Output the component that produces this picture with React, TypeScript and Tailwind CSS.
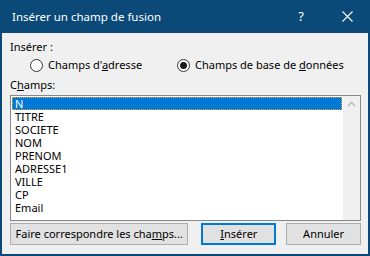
import React from 'react'

const FIELDS = ['N', 'TITRE', 'SOCIETE', 'NOM', 'PRENOM', 'ADRESSE1', 'VILLE', 'CP', 'Email']

function Radio({ checked, children }: { checked?: boolean; children: React.ReactNode }) {
  return (
    <div className="flex items-center gap-[5px]">
      <span className="flex h-[13px] w-[13px] items-center justify-center rounded-full border border-[#333333] bg-white">
        {checked && <span className="h-[7px] w-[7px] rounded-full bg-[#1a1a1a]" />}
      </span>
      <span>{children}</span>
    </div>
  )
}

export default function App() {
  return (
    <div
      className="flex h-[256px] w-[370px] flex-col bg-[#0b4a78] text-[11px] text-black"
      style={{ fontFamily: '"Noto Sans", "Segoe UI", sans-serif' }}
    >
      {/* Title bar */}
      <div className="flex h-[33px] shrink-0 items-center pl-[12px] text-white">
        <span className="flex-1 text-[11.5px]">Insérer un champ de fusion</span>
        <span className="w-[46px] text-center text-[13px]">?</span>
        <span className="flex w-[46px] items-center justify-center">
          <svg width="11" height="11" viewBox="0 0 11 11" stroke="white" strokeWidth="1.1">
            <path d="M0.5 0.5 L10.5 10.5 M10.5 0.5 L0.5 10.5" />
          </svg>
        </span>
      </div>

      {/* Body */}
      <div className="mx-[2px] mb-[2px] flex flex-1 flex-col bg-[#f0f0f0] pl-[8px] pr-[7px] pt-[6px]">
        <div className="leading-[16px]">Insérer :</div>
        <div className="mt-[1px] flex h-[18px] items-center pl-[20px] leading-[16px]">
          <div className="w-[147px]">
            <Radio>
              Champs d'<span className="underline">a</span>dresse
            </Radio>
          </div>
          <Radio checked>
            Champs de base de <span className="underline">d</span>onnées
          </Radio>
        </div>
        <div className="mt-[3px] leading-[16px]">
          C<span className="underline">h</span>amps:
        </div>

        {/* List */}
        <div className="mt-[2px] flex h-[126px] border border-[#828790] bg-white">
          <div className="flex-1 py-[1px] pl-[1px]">
            {FIELDS.map((f, i) => (
              <div
                key={f}
                className={
                  i === 0
                    ? 'h-[13px] border border-dotted border-[#f5a623] bg-[#0078d7] pl-[2px] leading-[11px] text-white'
                    : 'h-[13px] pl-[3px] leading-[13px]'
                }
              >
                {f}
              </div>
            ))}
          </div>
          <div className="ml-[1px] flex w-[17px] justify-center bg-[#f0f0f0] pt-[5px]">
            <svg width="9" height="6" viewBox="0 0 9 6" fill="none" stroke="#c0c0c0" strokeWidth="1.6">
              <path d="M0.8 5.2 L4.5 1.5 L8.2 5.2" />
            </svg>
          </div>
        </div>

        {/* Buttons */}
        <div className="mt-[2px] flex h-[22px] items-stretch whitespace-nowrap">
          <button className="w-[179px] border border-[#adadad] bg-[#e1e1e1] leading-[18px]">
            Faire correspondre les cha<span className="underline">m</span>ps...
          </button>
          <button className="ml-[13px] w-[75px] border-2 border-[#0078d7] bg-[#e1e1e1] leading-[16px]">
            <span className="underline">I</span>nsérer
          </button>
          <button className="ml-[10px] w-[75px] border border-[#adadad] bg-[#e1e1e1] leading-[18px]">
            Annuler
          </button>
        </div>
      </div>
    </div>
  )
}
